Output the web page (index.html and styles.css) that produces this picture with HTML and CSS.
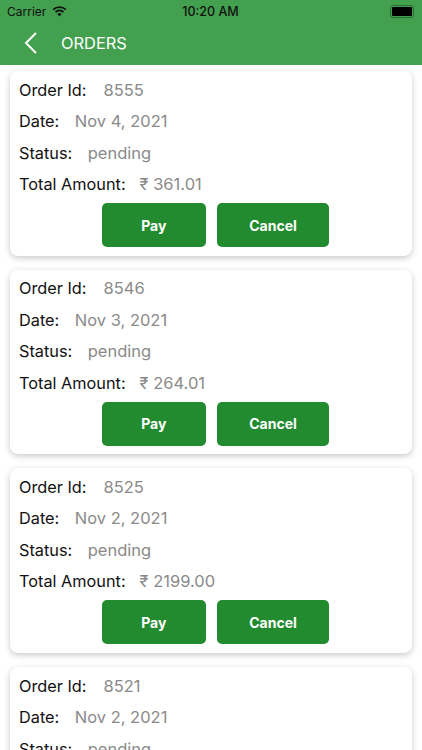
FILE: index.html

```html
<!DOCTYPE html>
<html lang="en">
<head>
    <meta charset="UTF-8">
    <meta name="viewport" content="width=device-width, initial-scale=1.0">
    <title>Orders</title>
    <link rel="stylesheet" href="styles.css">
</head>
<body>
    <header class="header">
        <div class="status-bar">
            <div class="status-left">
                <span class="carrier">Carrier</span>
                <svg class="wifi" width="15" height="11" viewBox="0 0 16 12">
                    <path d="M8 11.5 5.6 8.7a3.5 3.5 0 0 1 4.8 0z" fill="#111"/>
                    <path d="M3.7 6.6a6.3 6.3 0 0 1 8.6 0" fill="none" stroke="#111" stroke-width="2"/>
                    <path d="M1.1 3.9a10 10 0 0 1 13.8 0" fill="none" stroke="#111" stroke-width="2"/>
                </svg>
            </div>
            <span class="clock">10:20 AM</span>
            <div class="battery"><div class="battery-fill"></div></div>
        </div>
        <div class="nav-bar">
            <svg class="back" width="14" height="24" viewBox="0 0 14 24">
                <path d="M12 2 2 12l10 10" fill="none" stroke="#fff" stroke-width="2"/>
            </svg>
            <span class="nav-title">ORDERS</span>
        </div>
    </header>

    <main class="orders">
        <section class="card">
            <p class="row row-id"><span class="label">Order Id:</span><span class="value">8555</span></p>
            <p class="row"><span class="label">Date:</span><span class="value">Nov 4, 2021</span></p>
            <p class="row"><span class="label">Status:</span><span class="value">pending</span></p>
            <p class="row row-total"><span class="label">Total Amount:</span><span class="value">₹ 361.01</span></p>
            <div class="actions">
                <button class="btn btn-pay">Pay</button>
                <button class="btn btn-cancel">Cancel</button>
            </div>
        </section>
        <section class="card">
            <p class="row row-id"><span class="label">Order Id:</span><span class="value">8546</span></p>
            <p class="row"><span class="label">Date:</span><span class="value">Nov 3, 2021</span></p>
            <p class="row"><span class="label">Status:</span><span class="value">pending</span></p>
            <p class="row row-total"><span class="label">Total Amount:</span><span class="value">₹ 264.01</span></p>
            <div class="actions">
                <button class="btn btn-pay">Pay</button>
                <button class="btn btn-cancel">Cancel</button>
            </div>
        </section>
        <section class="card">
            <p class="row row-id"><span class="label">Order Id:</span><span class="value">8525</span></p>
            <p class="row"><span class="label">Date:</span><span class="value">Nov 2, 2021</span></p>
            <p class="row"><span class="label">Status:</span><span class="value">pending</span></p>
            <p class="row row-total"><span class="label">Total Amount:</span><span class="value">₹ 2199.00</span></p>
            <div class="actions">
                <button class="btn btn-pay">Pay</button>
                <button class="btn btn-cancel">Cancel</button>
            </div>
        </section>
        <section class="card">
            <p class="row row-id"><span class="label">Order Id:</span><span class="value">8521</span></p>
            <p class="row"><span class="label">Date:</span><span class="value">Nov 2, 2021</span></p>
            <p class="row"><span class="label">Status:</span><span class="value">pending</span></p>
        </section>
    </main>
</body>
</html>
```

FILE: styles.css

```css
html, body {
    height: 100%;
}

body {
    margin: 0;
    overflow: hidden;
    background-color: #fff;
    font-family: Inter, "Liberation Sans", sans-serif;
}

.header {
    height: 65px;
    background-color: #43a04f;
}

.status-bar {
    display: grid;
    grid-template-columns: 1fr auto 1fr;
    align-items: center;
    height: 22px;
    padding: 0 8px 0 7px;
    color: #111;
    font-size: 12px;
}

.status-left {
    display: flex;
    align-items: center;
    gap: 6px;
}

.clock {
    font-weight: 500;
    font-size: 12.5px;
}

.battery {
    justify-self: end;
    width: 20px;
    height: 9px;
    padding: 1px;
    border: 1px solid #2c6b35;
    border-radius: 3px;
}

.battery-fill {
    height: 100%;
    background-color: #000;
    border-radius: 1px;
}

.nav-bar {
    display: flex;
    align-items: center;
    height: 41px;
    padding-left: 24px;
}

.back {
    margin-right: 23px;
}

.nav-title {
    color: #fff;
    font-size: 16.4px;
}

.orders {
    display: flex;
    flex-direction: column;
    gap: 14px;
    padding: 6px 10px 0;
}

.card {
    padding: 3px 9px 8.6px;
    background-color: #fff;
    border-radius: 8px;
    box-shadow: 0 2px 6px rgba(0, 0, 0, 0.22);
}

.row {
    display: flex;
    gap: 15.5px;
    align-items: center;
    height: 31.5px;
    margin: 0;
    font-size: 16.3px;
    color: #111;
}

.row-id {
    gap: 17px;
}

.row-total {
    gap: 14px;
}

.value {
    color: #8a8a8a;
    font-size: 16.5px;
}

.actions {
    display: flex;
    justify-content: center;
    gap: 11.5px;
    margin-top: 3px;
    padding-left: 9px;
}

.btn {
    height: 44px;
    border: none;
    border-radius: 5px;
    background-color: #228b30;
    color: #fff;
    font-family: inherit;
    font-size: 14px;
    font-weight: 700;
}

.btn-pay {
    width: 103.5px;
}

.btn-cancel {
    width: 112px;
}
```
